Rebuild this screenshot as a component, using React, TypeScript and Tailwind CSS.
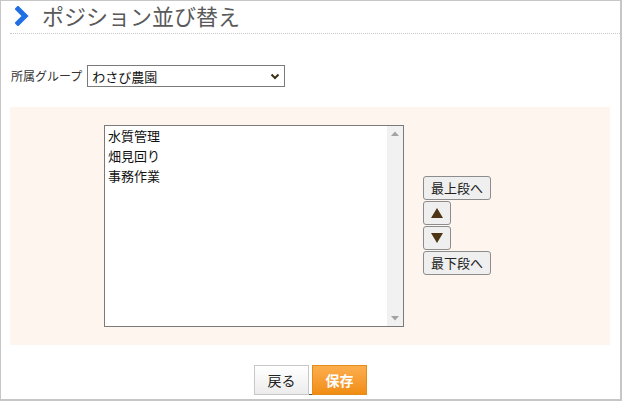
import React from "react";

const font = "font-['Noto_Sans_CJK_JP','Noto_Sans',sans-serif]";

function Btn({ children, w }: { children: React.ReactNode; w: string }) {
  return (
    <div
      className={`${w} h-[24px] flex items-center justify-center rounded-[3px] border border-[#8c8c8c] bg-[#efefef] text-[13px] text-[#222] leading-none`}
    >
      {children}
    </div>
  );
}

export default function App() {
  return (
    <div
      className={`w-[622px] h-[401px] overflow-hidden bg-white border-l border-t border-r-2 border-b-2 border-[#c6c6c6] ${font}`}
    >
      {/* header */}
      <div className="ml-[9px] h-[33px] border-b border-dotted border-[#c8c8c8] flex items-center pl-[5px]">
        <svg width="14" height="20" viewBox="0 0 14 20" className="shrink-0 mt-[-3px]">
          <polyline
            points="3,3 10,10 3,17"
            fill="none"
            stroke="#1f6fe6"
            strokeWidth="5"
            strokeLinecap="square"
            strokeLinejoin="miter"
          />
        </svg>
        <div className="ml-[13px] text-[22px] leading-none text-[#5a5a5a] mt-[-4px]">
          ポジション並び替え
        </div>
      </div>

      {/* group select */}
      <div className="mt-[31px] pl-[10px] flex items-center">
        <span className="text-[12px] text-[#333] leading-none">所属グループ</span>
        <div className="ml-[5px] w-[198px] h-[22px] border border-[#7a7a7a] flex items-center justify-between pl-[4px] pr-[4px]">
          <span className="text-[13px] text-[#111] leading-none">わさび農園</span>
          <svg width="10" height="7" viewBox="0 0 10 7">
            <polyline
              points="1.5,1.5 5,5 8.5,1.5"
              fill="none"
              stroke="#3e3018"
              strokeWidth="2"
            />
          </svg>
        </div>
      </div>

      {/* panel */}
      <div className="mt-[20px] ml-[9px] w-[600px] bg-[#fef5ef] py-[18px] pl-[94px] flex items-center">
        <div className="w-[300px] h-[202px] border border-[#7a7a7a] bg-white flex">
          <div className="flex-1">
            {["水質管理", "畑見回り", "事務作業"].map((t) => (
              <div key={t} className="h-[20px] leading-[20px] pl-[3px] text-[13px] text-[#111]">
                {t}
              </div>
            ))}
          </div>
          <div className="w-[16px] bg-[#f1f1f1] flex flex-col items-center justify-between py-[5px]">
            <svg width="8" height="5" viewBox="0 0 8 5">
              <polygon points="0,5 4,0.5 8,5" fill="#a3a3a3" />
            </svg>
            <svg width="8" height="5" viewBox="0 0 8 5">
              <polygon points="0,0 8,0 4,4.5" fill="#a3a3a3" />
            </svg>
          </div>
        </div>
        <div className="ml-[19px] flex flex-col gap-[1px] mt-[-2px]">
          <Btn w="w-[68px]">最上段へ</Btn>
          <Btn w="w-[28px]">
            <svg width="12" height="10" viewBox="0 0 12 10">
              <polygon points="0,10 6,0 12,10" fill="#4d3415" />
            </svg>
          </Btn>
          <Btn w="w-[28px]">
            <svg width="12" height="10" viewBox="0 0 12 10">
              <polygon points="0,0 12,0 6,10" fill="#4d3415" />
            </svg>
          </Btn>
          <Btn w="w-[68px]">最下段へ</Btn>
        </div>
      </div>

      {/* bottom buttons */}
      <div className="mt-[20px] flex justify-center items-end">
        <div className="w-[55px] h-[30px] flex items-center justify-center border border-[#c8c8c8] bg-gradient-to-b from-[#ffffff] to-[#ececec] text-[14px] text-[#222] leading-none">
          戻る
        </div>
        <div className="w-[3px] h-[12px] border-b border-[#555]" />
        <div className="w-[55px] h-[30px] flex items-center justify-center border border-[#e38c1c] bg-gradient-to-b from-[#fcae4c] to-[#f18d10] text-[14px] font-bold text-white leading-none">
          保存
        </div>
      </div>
    </div>
  );
}
